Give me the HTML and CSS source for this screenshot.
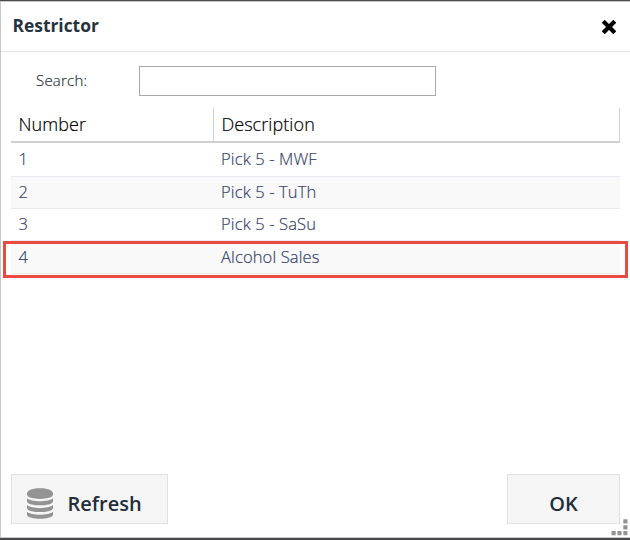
FILE: index.html
```html
<!DOCTYPE html>
<html lang="en">
<head>
<meta charset="utf-8">
<title>Restrictor</title>
<link rel="stylesheet" href="styles.css">
</head>
<body>
<div class="dialog">
  <header class="titlebar">
    <h1 class="title">Restrictor</h1>
    <button class="close" aria-label="Close">
      <svg width="14" height="14" viewBox="0 0 14 14"><path d="M2.7 2.7 11.3 11.3M11.3 2.7 2.7 11.3" stroke="#000" stroke-width="4.2" stroke-linecap="square" stroke-linejoin="round"/></svg>
    </button>
  </header>
  <div class="search">
    <label class="search-label" for="q">Search:</label>
    <input class="search-input" id="q" type="text">
  </div>
  <div class="grid">
    <div class="row head"><div class="cell num">Number</div><div class="cell">Description</div></div>
    <div class="row first"><div class="cell num">1</div><div class="cell">Pick 5 - MWF</div></div>
    <div class="row alt"><div class="cell num">2</div><div class="cell">Pick 5 - TuTh</div></div>
    <div class="row"><div class="cell num">3</div><div class="cell">Pick 5 - SaSu</div></div>
    <div class="row alt marked"><div class="cell num">4</div><div class="cell">Alcohol Sales</div></div>
  </div>
  <footer class="actions">
    <button class="btn refresh">
      <svg width="26" height="31" viewBox="0 0 26 31" fill="#939393">
        <path d="M0 5.4C0 -1.6 26 -1.6 26 5.4V6.6C26 12.4 0 12.4 0 6.6Z"/>
        <path d="M0 10.2C4 14.2 22 14.2 26 10.2V13.4C24.5 18.6 1.5 18.6 0 13.4Z"/>
        <path d="M0 17C4 21 22 21 26 17V20.2C24.5 25.4 1.5 25.4 0 20.2Z"/>
        <path d="M0 23.8C4 27.8 22 27.8 26 23.8V27C24.5 32 1.5 32 0 27Z"/>
      </svg>
      <span>Refresh</span>
    </button>
    <button class="btn ok">OK</button>
  </footer>
  <svg class="grip" width="17" height="17" viewBox="0 0 17 17" fill="#939393">
    <rect x="12.3" y="0.3" width="4.2" height="4.2" rx=".6"/><rect x="12.3" y="6.2" width="4.2" height="4.2" rx=".6"/>
    <rect x="12.3" y="12.1" width="4.2" height="4.2" rx=".6"/><rect x="6.4" y="12.1" width="4.2" height="4.2" rx=".6"/><rect x="0.5" y="12.1" width="4.2" height="4.2" rx=".6"/>
  </svg>
</div>
</body>
</html>
```
FILE: styles.css
```css
* { box-sizing: border-box; }
body {
  margin: 0;
  padding: 1px 0 2px;
  height: 540px;
  overflow: hidden;
  background: #4a494b;
  font-family: "Open Sans", sans-serif;
}
.dialog {
  position: relative;
  display: flex;
  flex-direction: column;
  height: 537px;
  background: #fff;
  border: 1px solid #c8c8c8;
  border-right: 0;
}
.titlebar {
  display: flex;
  justify-content: space-between;
  align-items: center;
  height: 50px;
  padding: 0 14px 0 11.5px;
  border-bottom: 1px solid #e5e5e5;
}
.title {
  margin: -3px 0 0;
  font-size: 17.4px;
  line-height: 24px;
  font-weight: 700;
  color: #273240;
}
.close {
  display: flex;
  padding: 0;
  margin-top: 1px;
  border: 0;
  background: none;
}
.search {
  display: flex;
  align-items: center;
  height: 30px;
  margin-top: 14px;
  padding-left: 35px;
}
.search-label {
  width: 103px;
  margin-top: -2px;
  font-size: 15px;
  font-weight: 300;
  letter-spacing: .22px;
  -webkit-text-stroke: .2px;
  color: #273240;
}
.search-input {
  width: 297px;
  height: 30px;
  border: 1px solid #a9a9a9;
  background: #fff;
}
.grid { margin: 12px 10px 0; }
.row {
  display: flex;
  height: 32.4px;
  border-bottom: 1px solid #e8eaef;
  font-size: 16.5px;
  line-height: 29.6px;
  color: #364469;
  font-weight: 300;
  letter-spacing: .14px;
  -webkit-text-stroke: .2px;
}
.first { height: 33.6px; line-height: 32px; }
.cell { padding-left: 8px; }
.num { width: 202px; padding-left: 7.4px; }
.alt { background: #f9f9f9; }
.head {
  height: 35px;
  border-bottom: 2px solid #d0d0d0;
  font-size: 18px;
  line-height: 33px;
  letter-spacing: .08px;
  color: #000;
}
.head .cell { padding-left: 7.4px; border-right: 1px solid #d0d0d0; flex: 1; }
.head .num { flex: none; width: 203px; }
.marked { position: relative; line-height: 31px; }
.marked::after {
  content: "";
  position: absolute;
  inset: 0 -8px -5px;
  border: 3px solid #eb4a43;
}
.actions {
  display: flex;
  justify-content: space-between;
  margin: auto 10px 13px;
}
.btn {
  display: flex;
  align-items: center;
  height: 50px;
  padding: 9px 0 0;
  border: 1px solid #e1e1e1;
  background: #f5f5f5;
  font: 600 20px/30px "Open Sans", sans-serif;
  color: #222d3b;
}
.refresh { width: 157px; padding-left: 15px; gap: 14.5px; }
.ok { width: 113px; justify-content: center; }
.grip {
  position: absolute;
  right: 2px;
  bottom: 1px;
}
```
